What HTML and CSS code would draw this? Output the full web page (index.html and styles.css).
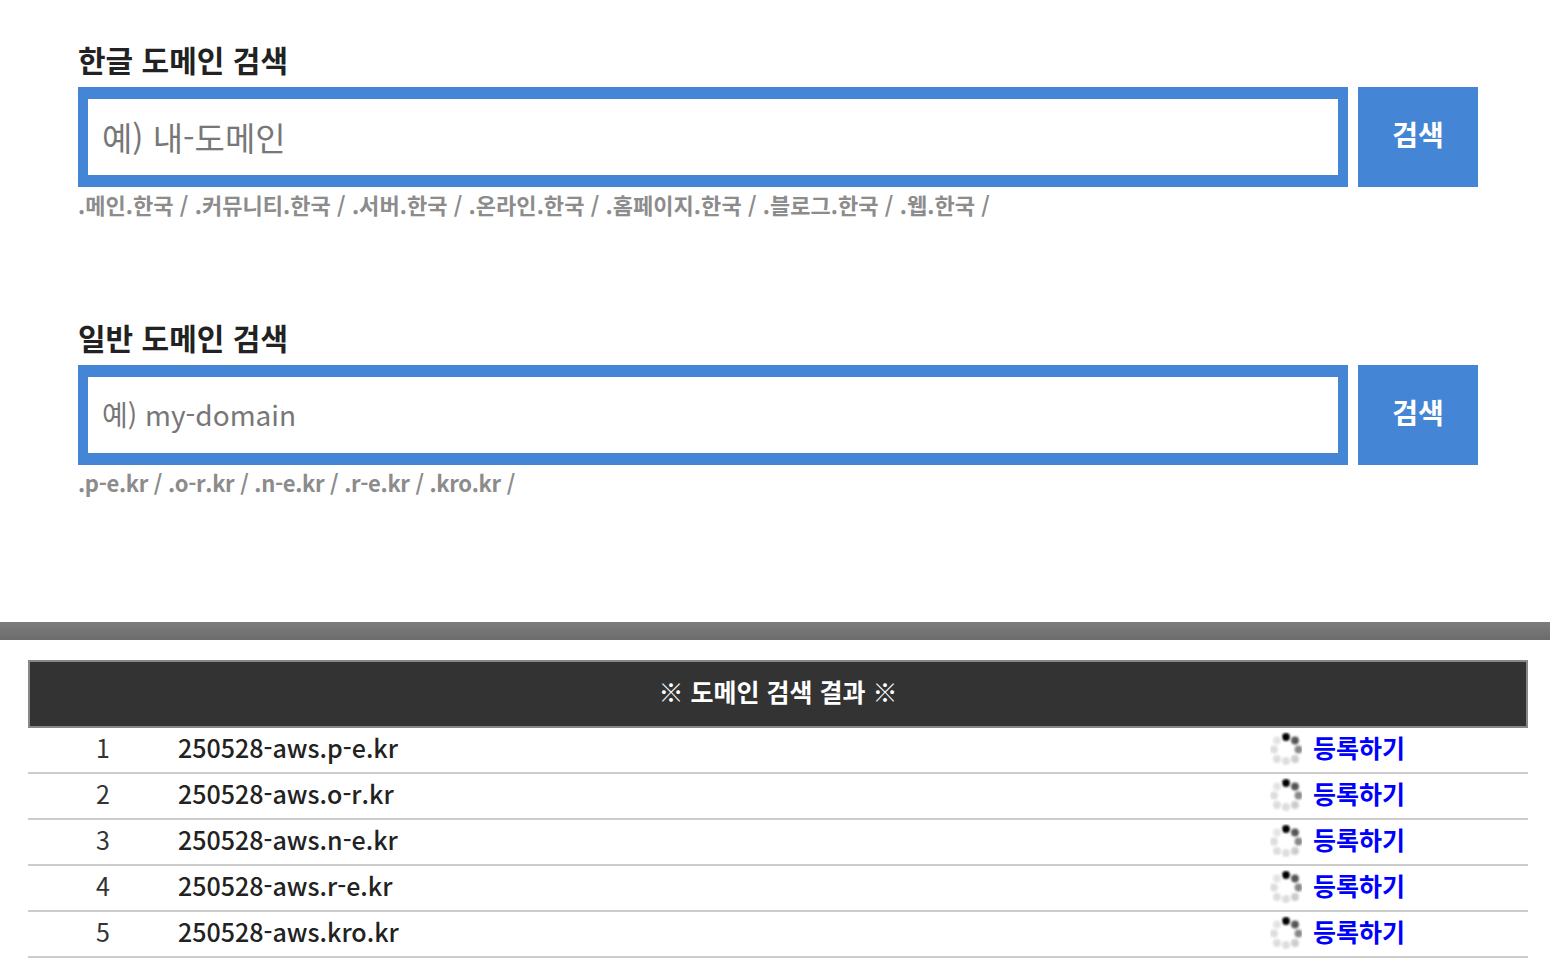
FILE: index.html
```html
<!DOCTYPE html>
<html lang="ko">
<head>
    <meta charset="UTF-8">
    <title>도메인 검색</title>
    <link rel="stylesheet" href="styles.css">
</head>
<body>
    <section class="Search-Section">
        <form class="Search-Block">
            <h2>한글 도메인 검색</h2>
            <div class="Search-Row">
                <input type="text" class="Search-Input Input-Large" placeholder="예) 내-도메인">
                <button type="button" class="Search-Button">검색</button>
            </div>
            <p class="Zone-List Zone-Hangul">.메인.한국 / .커뮤니티.한국 / .서버.한국 / .온라인.한국 / .홈페이지.한국 / .블로그.한국 / .웹.한국 /</p>
        </form>
        <form class="Search-Block">
            <h2>일반 도메인 검색</h2>
            <div class="Search-Row">
                <input type="text" class="Search-Input" placeholder="예) my-domain">
                <button type="button" class="Search-Button">검색</button>
            </div>
            <p class="Zone-List Zone-Latin">.p-e.kr / .o-r.kr / .n-e.kr / .r-e.kr / .kro.kr /</p>
        </form>
    </section>
    <div class="Divider"></div>
    <section class="Result-Section">
        <div class="Result-Title">※ 도메인 검색 결과 ※</div>
        <div class="Result-Row">
            <span class="Result-Num">1</span>
            <span class="Result-Domain">250528-aws.p-e.kr</span>
            <span class="Result-Action"><svg class="Spinner"><use href="#spin"/></svg><a href="#">등록하기</a></span>
        </div>
        <div class="Result-Row">
            <span class="Result-Num">2</span>
            <span class="Result-Domain">250528-aws.o-r.kr</span>
            <span class="Result-Action"><svg class="Spinner"><use href="#spin"/></svg><a href="#">등록하기</a></span>
        </div>
        <div class="Result-Row">
            <span class="Result-Num">3</span>
            <span class="Result-Domain">250528-aws.n-e.kr</span>
            <span class="Result-Action"><svg class="Spinner"><use href="#spin"/></svg><a href="#">등록하기</a></span>
        </div>
        <div class="Result-Row">
            <span class="Result-Num">4</span>
            <span class="Result-Domain">250528-aws.r-e.kr</span>
            <span class="Result-Action"><svg class="Spinner"><use href="#spin"/></svg><a href="#">등록하기</a></span>
        </div>
        <div class="Result-Row">
            <span class="Result-Num">5</span>
            <span class="Result-Domain">250528-aws.kro.kr</span>
            <span class="Result-Action"><svg class="Spinner"><use href="#spin"/></svg><a href="#">등록하기</a></span>
        </div>
    </section>
    <svg class="Sprite" width="0" height="0">
        <defs>
            <filter id="soft" filterUnits="userSpaceOnUse" x="0" y="0" width="32" height="34"><feGaussianBlur stdDeviation="0.9"/></filter>
            <g id="spin" filter="url(#soft)">
                <circle cx="16" cy="5" r="3.9" fill="#000"/>
                <circle cx="25" cy="8.5" r="3.9" fill="#555"/>
                <circle cx="28.5" cy="17.5" r="3.9" fill="#888"/>
                <circle cx="25" cy="27" r="3.9" fill="#ccc"/>
                <circle cx="16" cy="29" r="3.9" fill="#ddd"/>
                <circle cx="7" cy="27" r="3.9" fill="#ddd"/>
                <circle cx="4" cy="17.5" r="3.9" fill="#ddd"/>
                <circle cx="7" cy="8.5" r="3.9" fill="#e4e4e4"/>
            </g>
        </defs>
    </svg>
</body>
</html>
```

FILE: styles.css
```css
*{
    box-sizing: border-box;
    padding: 0;
    margin: 0;
    font-family: "Noto Sans CJK KR", "Noto Sans", sans-serif;
}
body{
    background-color: #fff;
    color: #222;
}
.Search-Section{
    padding: 38px 72px 0 78px;
    height: 622px;
}
.Search-Block{
    height: 278px;
}
.Search-Block h2{
    font-size: 30px;
    font-weight: 700;
    line-height: 43px;
    padding-bottom: 6px;
    color: #222;
}
.Search-Row{
    display: flex;
    gap: 10px;
    height: 100px;
}
.Search-Input{
    flex: 1;
    min-width: 0;
    border: solid #4485d6;
    border-width: 12px 10px;
    padding: 0 14px 2px;
    font-size: 28px;
    outline: none;
    background-color: #fff;
}
.Input-Large{
    font-size: 33px;
    padding-bottom: 0;
}
.Search-Input::placeholder{
    color: #777;
    opacity: 1;
}
.Search-Button{
    width: 120px;
    border: none;
    padding-bottom: 6px;
    background-color: #4485d6;
    color: #fff;
    font-size: 28px;
    font-weight: 700;
    cursor: pointer;
}
.Zone-List{
    margin-top: 2px;
    font-size: 22px;
    line-height: 30px;
    font-weight: 700;
    color: #8c8c8c;
}
.Zone-Hangul{
    letter-spacing: 0.05px;
}
.Zone-Latin{
    letter-spacing: -0.33px;
}
.Divider{
    height: 18px;
    background: linear-gradient(#7c7c7c, #6c6c6c);
}
.Result-Section{
    margin: 20px 22px 0 28px;
}
.Result-Title{
    height: 68px;
    border: 2px solid #888;
    padding-bottom: 6px;
    background-color: #333;
    color: #fff;
    font-size: 25px;
    font-weight: 700;
    display: flex;
    align-items: center;
    justify-content: center;
}
.Result-Row{
    display: flex;
    align-items: center;
    height: 46px;
    padding-bottom: 6px;
    border-bottom: 2px solid #ccc;
    font-size: 25px;
}
.Result-Num{
    width: 150px;
    text-align: center;
    color: #333;
}
.Result-Domain{
    flex: 1;
    font-weight: 500;
    color: #222;
}
.Result-Action{
    width: 258px;
    display: flex;
    align-items: center;
    gap: 11px;
}
.Result-Action a{
    color: #00f;
    font-weight: 700;
    text-decoration: none;
}
.Spinner{
    width: 32px;
    height: 34px;
    margin-bottom: -4px;
}
.Sprite{
    position: absolute;
}
```
